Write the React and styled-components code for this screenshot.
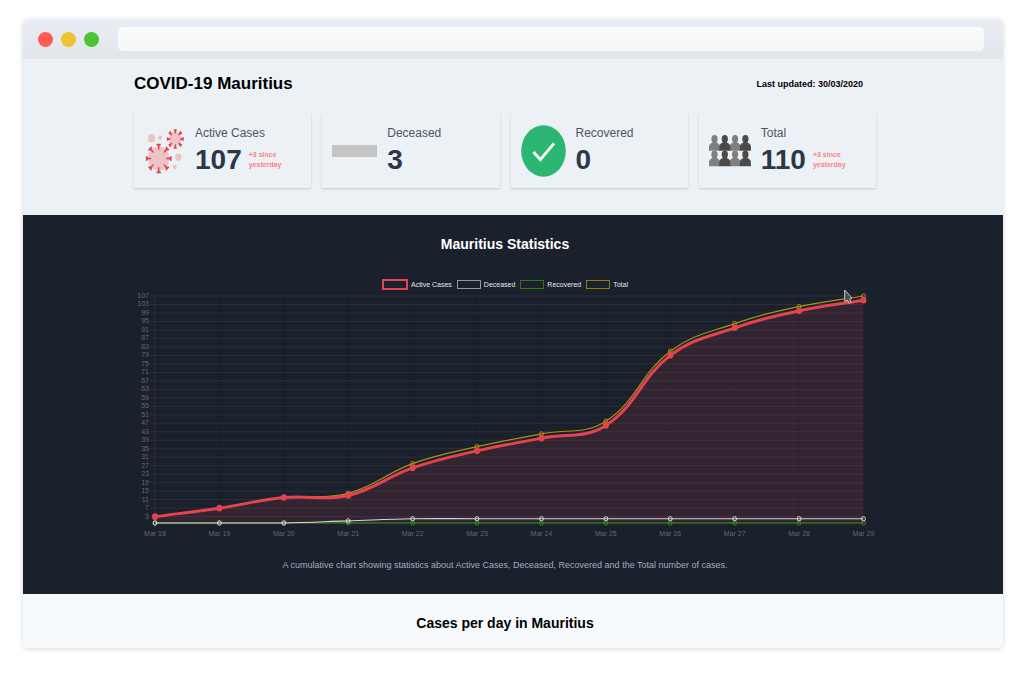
import React from "react";
import styled, { createGlobalStyle } from "styled-components";

const GlobalStyle = createGlobalStyle`
  * {
    box-sizing: border-box;
  }
  body {
    margin: 0;
    background-color: #ffffff;
    font-family: "Liberation Sans", Arial, sans-serif;
  }
  h1, h2, h3, p {
    margin: 0;
  }
`;

const Browser = styled.div`
  margin: 19px 21px 26px 23px;
  border-radius: 5px;
  overflow: hidden;
  box-shadow: 0 1px 5px rgba(0, 0, 0, 0.16);
`;
const TitleBar = styled.div`
  display: flex;
  align-items: center;
  gap: 8px;
  height: 40px;
  padding: 0 19px 0 15px;
  background: linear-gradient(#eaedf5, #e2e5e9);
`;
const Light = styled.span`
  width: 15px;
  height: 15px;
  border-radius: 50%;
  background-color: ${(props) => props.color};
`;
const Address = styled.input`
  flex: 1;
  height: 24px;
  margin-left: 11px;
  padding: 0 8px;
  border: none;
  border-radius: 5px;
  background: linear-gradient(#f9fafc, #f6f7f7);
`;

const Section = styled.section`
  padding: ${(props) => props.pad};
  background-color: ${(props) => props.bg};
`;
const Container = styled.div`
  max-width: 742px;
  margin: 0 auto;
`;
const Header = styled.header`
  display: flex;
  align-items: center;
  justify-content: space-between;
  height: 50px;
  padding-right: 13px;
`;
const Title = styled.h1`
  font-size: 17px;
  line-height: 24px;
`;
const Updated = styled.p`
  font-size: 9px;
  font-weight: 700;
`;
const Cards = styled.div`
  display: grid;
  grid-template-columns: repeat(4, 1fr);
  gap: 11px;
  margin-top: 4px;
`;
const Card = styled.div`
  display: flex;
  align-items: center;
  gap: 10px;
  height: 75px;
  padding: 0 10px;
  border-radius: 1px;
  box-shadow: 0 1px 3px rgba(0, 0, 0, 0.1), 0 1px 2px rgba(0, 0, 0, 0.07);
  svg {
    flex: none;
  }
`;
const Label = styled.h3`
  font-size: 12px;
  line-height: 18px;
  font-weight: 400;
  color: #4a5568;
`;
const Figures = styled.div`
  display: flex;
  align-items: center;
  gap: 7px;
`;
const Count = styled.span`
  font-size: 28px;
  line-height: 36px;
  font-weight: 700;
  color: #2d3748;
`;
const Change = styled.span`
  width: 40px;
  font-size: 7px;
  line-height: 10px;
  font-weight: 700;
  color: #fc8181;
`;
const Bar = styled.span`
  width: 45px;
  height: 12px;
  background-color: #c4c4c4;
`;

const Heading = styled.h2`
  font-size: 14px;
  line-height: 20px;
  text-align: center;
  color: ${(props) => props.color};
`;
const Legend = styled.div`
  display: flex;
  justify-content: center;
  gap: 5px;
  margin-top: 25px;
`;
const LegendItem = styled.span`
  display: flex;
  align-items: center;
  gap: 3px;
  font-size: 7px;
  line-height: 11px;
  color: #e2e8f0;
  &::before {
    content: "";
    width: 22px;
    height: 7px;
    border: ${(props) => props.line}px solid ${(props) => props.color};
  }
`;
const Chart = styled.svg`
  display: block;
  width: 100%;
  height: auto;
  font-size: 7px;
`;
const Caption = styled.p`
  margin-top: 15px;
  font-size: 9px;
  line-height: 20px;
  text-align: center;
  color: #a0aec0;
`;

const Spikes = ({ cx, cy, r, len, w }) => (
  <g transform={`translate(${cx} ${cy}) scale(0.866 1)`} fill="#e5404f">
    {[0, 45, 90, 135, 180, 225, 270, 315].map((a) => (
      <path
        key={a}
        transform={`rotate(${a})`}
        d={`M${-w} ${-r} H${w} V${-r + 1} L1 ${-r + 2.4} L0.6 ${-r + len} H-0.6 L-1 ${-r + 2.4} L${-w} ${-r + 1} Z`}
      />
    ))}
  </g>
);

const VirusIcon = () => (
  <svg width="41" height="48" viewBox="0 1 41 48" aria-hidden="true">
    <g fill="#ecc4c5">
      <ellipse cx="14.7" cy="32.5" rx="10.6" ry="12.2" />
      <ellipse cx="31.3" cy="13" rx="6.4" ry="7.4" />
      <ellipse cx="7.6" cy="12.2" rx="3.7" ry="4.3" />
      <ellipse cx="16" cy="11.5" rx="2.1" ry="2.5" />
      <ellipse cx="34.3" cy="31.2" rx="3.2" ry="3.7" />
      <ellipse cx="30.7" cy="41.2" rx="2" ry="2.4" />
    </g>
    <Spikes cx={14.7} cy={32.5} r={14.8} len={6.4} w={2.6} />
    <Spikes cx={31.3} cy={13} r={9.8} len={4.4} w={1.7} />
  </svg>
);

const CheckIcon = () => (
  <svg width="45" height="52" viewBox="0 0 45 52" aria-hidden="true">
    <ellipse cx="22.5" cy="26" rx="22.3" ry="25.7" fill="#2cb673" />
    <path d="M12.5 27 L19.3 34.7 L33 18.3" fill="none" stroke="#fff" strokeWidth="2.8" />
  </svg>
);

const PeopleIcon = () => (
  <svg width="42" height="32" viewBox="0 0 42 32" aria-hidden="true">
    {[0, 15.5].map((y) =>
      [0, 20.6, 10.3, 30.9].map((x, i) => (
        <g key={x + "-" + y} transform={`translate(${x} ${y})`} fill={i < 2 ? "#7f7f7f" : "#4a4a4a"}>
          <ellipse cx="5.5" cy="4" rx="3.1" ry="3.9" />
          <path d="M0 15.8 V11.5 Q0.4 8.6 3.8 7.6 V6.5 H7.2 V7.6 Q10.6 8.6 11 11.5 V15.8 Z" />
        </g>
      ))
    )}
  </svg>
);

const active = [3, 7, 12, 13, 26, 34, 40, 46, 79, 92, 100, 105];
const deceased = [0, 0, 0, 1, 2, 2, 2, 2, 2, 2, 2, 2];
const recovered = [0, 0, 0, 0, 0, 0, 0, 0, 0, 0, 0, 0];
const total = active.map((n, i) => n + deceased[i]);

const LEFT = 21;
const RIGHT = 729.5;
const TOP = 6;
const BOTTOM = 233;
const xAt = (i) => LEFT + (i * (RIGHT - LEFT)) / 11;
const yAt = (v) => BOTTOM - (v * (BOTTOM - TOP)) / 107;
const ticks = Array.from({ length: 27 }, (_, i) => 107 - i * 4);

// smooth curve through the points, control points kept inside the plot
const curve = (data) => {
  const pts = data.map((v, i) => [xAt(i), yAt(v)]);
  const cap = (y) => Math.max(TOP, Math.min(BOTTOM, y));
  const ctrl = pts.map((p, i) => {
    const a = pts[i - 1] || p;
    const b = pts[i + 1] || p;
    const d1 = Math.hypot(p[0] - a[0], p[1] - a[1]);
    const d2 = Math.hypot(b[0] - p[0], b[1] - p[1]);
    const f1 = (0.4 * d1) / (d1 + d2);
    const f2 = (0.4 * d2) / (d1 + d2);
    const dx = b[0] - a[0];
    const dy = b[1] - a[1];
    return {
      prev: [p[0] - f1 * dx, cap(p[1] - f1 * dy)],
      next: [p[0] + f2 * dx, cap(p[1] + f2 * dy)],
    };
  });
  return pts
    .map((p, i) => (i === 0 ? `M${p}` : `C${ctrl[i - 1].next} ${ctrl[i].prev} ${p}`))
    .join(" ");
};

const series = [
  { name: "Total", data: total, color: "#a89312", line: 1.2 },
  { name: "Recovered", data: recovered, color: "#35900f", line: 1.2 },
  { name: "Deceased", data: deceased, color: "#d6d7da", line: 1.2 },
  { name: "Active Cases", data: active, color: "#e5434f", line: 3 },
];

const legend = [
  { name: "Active Cases", color: "#e5434f", line: 2 },
  { name: "Deceased", color: "#94979c", line: 1 },
  { name: "Recovered", color: "#2f7a17", line: 1 },
  { name: "Total", color: "#8c7c18", line: 1 },
];

const StatsChart = () => (
  <Chart viewBox="0 0 742 250" role="img" aria-label="Mauritius statistics chart">
    {active.map((_, i) => (
      <path
        key={i}
        d={`M${xAt(i)} ${TOP} V${BOTTOM + 5}`}
        stroke={i === 0 ? "#2a2f39" : "#181d28"}
      />
    ))}
    {[...ticks, 0].map((t) => (
      <path key={t} d={`M${LEFT - 5} ${yAt(t)} H${RIGHT}`} stroke="#2b303a" />
    ))}
    <path
      d={`${curve(active)} V${BOTTOM} H${LEFT} Z`}
      fill="#e5434f"
      fillOpacity="0.12"
    />
    {series.map((s) => (
      <g key={s.name} fill="none" stroke={s.color}>
        <path d={curve(s.data)} strokeWidth={s.line} />
        {s.data.map((v, i) => (
          <ellipse
            key={i}
            cx={xAt(i)}
            cy={yAt(v)}
            rx={s.line === 3 ? 1.7 : 1.9}
            ry={s.line === 3 ? 2 : 2.2}
            strokeWidth={s.line === 3 ? 2.6 : 1}
          />
        ))}
      </g>
    ))}
    <g fill="#66686e" textAnchor="end">
      {ticks.map((t) => (
        <text key={t} x="15" y={yAt(t) + 2}>
          {t}
        </text>
      ))}
    </g>
    <g fill="#66686e" textAnchor="middle">
      {active.map((_, i) => (
        <text key={i} x={xAt(i)} y="246">
          Mar {18 + i}
        </text>
      ))}
    </g>
    <path
      d="M710.7 0 V11.8 L713.3 10 L715.2 13.2 L716.6 12.4 L715.8 8.8 L718 8 Z"
      fill="#4d4d4f"
      stroke="#c9c9cb"
    />
  </Chart>
);

const App = () => {
  return (
    <>
      <GlobalStyle />
      <Browser>
        <TitleBar>
          <Light color="#ff5b52" />
          <Light color="#eec233" />
          <Light color="#4ac433" />
          <Address type="text" aria-label="Address" />
        </TitleBar>
        <Section bg="#ecf1f6" pad="0 16px 27px 0">
          <Container>
            <Header>
              <Title>COVID-19 Mauritius</Title>
              <Updated>Last updated: 30/03/2020</Updated>
            </Header>
            <Cards>
              <Card>
                <VirusIcon />
                <div>
                  <Label>Active Cases</Label>
                  <Figures>
                    <Count>107</Count>
                    <Change>+3 since yesterday</Change>
                  </Figures>
                </div>
              </Card>
              <Card>
                <Bar />
                <div>
                  <Label>Deceased</Label>
                  <Figures>
                    <Count>3</Count>
                  </Figures>
                </div>
              </Card>
              <Card>
                <CheckIcon />
                <div>
                  <Label>Recovered</Label>
                  <Figures>
                    <Count>0</Count>
                  </Figures>
                </div>
              </Card>
              <Card>
                <PeopleIcon />
                <div>
                  <Label>Total</Label>
                  <Figures>
                    <Count>110</Count>
                    <Change>+3 since yesterday</Change>
                  </Figures>
                </div>
              </Card>
            </Cards>
          </Container>
        </Section>
        <Section bg="#1a202c" pad="19px 16px 19px 0">
          <Container>
            <Heading color="#ffffff">Mauritius Statistics</Heading>
            <Legend>
              {legend.map((item) => (
                <LegendItem key={item.name} color={item.color} line={item.line}>
                  {item.name}
                </LegendItem>
              ))}
            </Legend>
            <StatsChart />
            <Caption>
              A cumulative chart showing statistics about Active Cases,
              Deceased, Recovered and the Total number of cases.
            </Caption>
          </Container>
        </Section>
        <Section bg="#f7fafc" pad="19px 16px 15px 0">
          <Heading color="#000000">Cases per day in Mauritius</Heading>
        </Section>
      </Browser>
    </>
  );
};

export default App;
